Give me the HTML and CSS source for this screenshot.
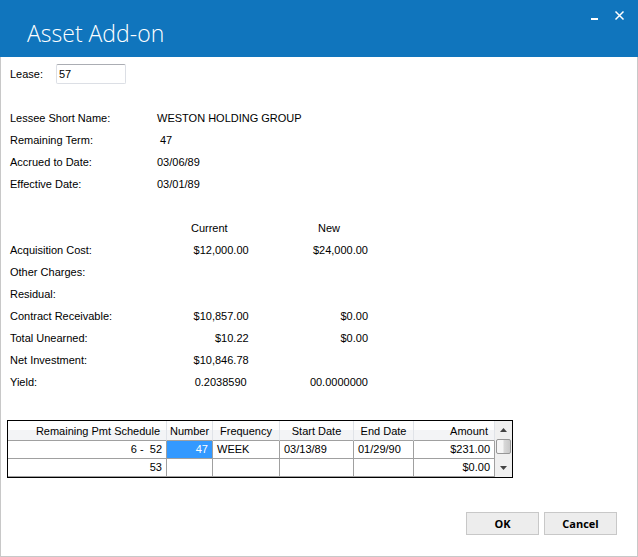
FILE: index.html
```html
<!DOCTYPE html>
<html lang="en">
<head>
<meta charset="utf-8">
<title>Asset Add-on</title>
<link rel="stylesheet" href="styles.css">
</head>
<body>
<header class="titlebar">
  <h1>Asset Add-on</h1>
  <div class="window-buttons">
    <button type="button" aria-label="Minimize"><svg width="11" height="11" viewBox="0 0 11 11"><path d="M2 9h7" stroke="#fff" stroke-width="2"/></svg></button>
    <button type="button" aria-label="Close"><svg width="11" height="11" viewBox="0 0 11 11"><path d="M1.5 1.5l8 8M9.5 1.5l-8 8" stroke="#fff" stroke-width="1.5"/></svg></button>
  </div>
</header>
<main class="content">
  <div class="lease">
    <label for="lease">Lease:</label>
    <input id="lease" type="text" value="57">
  </div>
  <dl class="details">
    <dt>Lessee Short Name:</dt><dd>WESTON HOLDING GROUP</dd>
    <dt>Remaining Term:</dt><dd class="term">47</dd>
    <dt>Accrued to Date:</dt><dd>03/06/89</dd>
    <dt>Effective Date:</dt><dd>03/01/89</dd>
  </dl>
  <table class="figures">
    <thead><tr><td></td><th scope="col" class="current">Current</th><th scope="col" class="new">New</th></tr></thead>
    <tbody>
      <tr><th scope="row">Acquisition Cost:</th><td>$12,000.00</td><td>$24,000.00</td></tr>
      <tr><th scope="row">Other Charges:</th><td></td><td></td></tr>
      <tr><th scope="row">Residual:</th><td></td><td></td></tr>
      <tr><th scope="row">Contract Receivable:</th><td>$10,857.00</td><td>$0.00</td></tr>
      <tr><th scope="row">Total Unearned:</th><td>$10.22</td><td>$0.00</td></tr>
      <tr><th scope="row">Net Investment:</th><td>$10,846.78</td><td></td></tr>
      <tr><th scope="row">Yield:</th><td class="yield">0.2038590</td><td>00.0000000</td></tr>
    </tbody>
  </table>
  <div class="schedule">
    <table>
      <colgroup><col class="c-range"><col class="c-number"><col class="c-freq"><col class="c-start"><col class="c-end"><col class="c-amount"></colgroup>
      <thead><tr><th class="num">Remaining Pmt Schedule</th><th>Number</th><th>Frequency</th><th>Start Date</th><th>End Date</th><th class="num">Amount</th></tr></thead>
      <tbody>
        <tr><td class="num">6 -&nbsp; 52</td><td class="num selected">47</td><td>WEEK</td><td>03/13/89</td><td>01/29/90</td><td class="num">$231.00</td></tr>
        <tr><td class="num">53</td><td></td><td></td><td></td><td></td><td class="num">$0.00</td></tr>
      </tbody>
    </table>
    <div class="scrollbar">
      <button type="button" aria-label="Scroll up"><svg width="7" height="4" viewBox="0 0 7 4"><path d="M0 4L3.5 0L7 4z" fill="#444"/></svg></button>
      <span class="thumb"></span>
      <button type="button" aria-label="Scroll down"><svg width="7" height="4" viewBox="0 0 7 4"><path d="M0 0h7L3.5 4z" fill="#444"/></svg></button>
    </div>
  </div>
  <footer class="actions">
    <button type="button">OK</button>
    <button type="button">Cancel</button>
  </footer>
</main>
</body>
</html>
```
FILE: styles.css
```css
* { box-sizing: border-box; }

body {
  margin: 0;
  min-height: 100vh;
  display: flex;
  flex-direction: column;
  background: #fff;
  color: #000;
  font: 11px/22px "Liberation Sans", Arial, sans-serif;
}

.titlebar {
  display: flex;
  justify-content: space-between;
  align-items: flex-start;
  height: 57px;
  padding: 10px 13px 0 27px;
  background: #1075bd;
}

.titlebar h1 {
  margin: 6px 0 0;
  color: #fff;
  font: 300 23px/34px "Open Sans", "Noto Sans", sans-serif;
}

.window-buttons { display: flex; gap: 14px; }

.window-buttons button {
  display: flex;
  padding: 0;
  border: 0;
  background: none;
}

.content {
  flex: 1;
  display: flex;
  flex-direction: column;
  padding: 6px 20px 21px 9px;
  border: 1px solid #c8c8c8;
  border-top: 0;
}

.lease { display: flex; }
.lease label { width: 46px; }

.lease input {
  width: 70px;
  height: 20px;
  margin-top: 1px;
  padding: 0 2px;
  border: 1px solid #dcdfe5;
  border-top-color: #abadb3;
  border-radius: 2px;
  background: #fff;
  font: inherit;
}

.details {
  display: grid;
  grid-template-columns: 147px 1fr;
  margin: 22px 0;
}

.details dd { margin: 0; }
.details .term { padding-left: 3px; }

.figures {
  align-self: flex-start;
  width: 358px;
  table-layout: fixed;
  border-collapse: collapse;
}

.figures th, .figures td {
  height: 22px;
  padding: 0;
  font-weight: normal;
  text-align: right;
}

.figures tbody th { text-align: left; }
.figures .current { padding-right: 21px; }
.figures .new { padding-right: 28px; }
.figures .yield { padding-right: 2px; }

.schedule {
  display: flex;
  align-self: flex-start;
  margin: 27px 0 0 -3px;
  border: 1px solid #000;
}

.schedule table {
  table-layout: fixed;
  width: 487px;
  border-collapse: separate;
  border-spacing: 0;
  line-height: 17px;
}

.c-range { width: 159px; }
.c-number { width: 46px; }
.c-freq { width: 67px; }
.c-start { width: 74px; }
.c-end { width: 60px; }
.c-amount { width: 81px; }

.schedule th, .schedule td {
  height: 18px;
  padding: 0 4px;
  border: solid #a0a0a0;
  border-width: 0 1px 1px 0;
  font-weight: normal;
  text-align: left;
  white-space: nowrap;
}

.schedule th {
  height: 20px;
  padding: 2px 0 0;
  border-right-color: #e0e3e8;
  background: linear-gradient(#fff 45%, #f3f4f6 50%);
  text-align: center;
}

.schedule .num { text-align: right; }
.schedule th.num { padding-right: 6px; }

.schedule .selected {
  background: #3399ff;
  color: #fff;
}

.scrollbar {
  display: flex;
  flex-direction: column;
  align-items: center;
  width: 17px;
  background: #f0f0f0;
}

.scrollbar button {
  display: flex;
  align-items: center;
  justify-content: center;
  width: 17px;
  height: 18px;
  padding: 0;
  border: 0;
  background: none;
}

.scrollbar button:last-child { margin-top: auto; }

.thumb {
  width: 15px;
  height: 15px;
  border: 1px solid #979797;
  border-radius: 2px;
  background: linear-gradient(90deg, #f5f5f5 45%, #d8d8d8 55%, #c8c8c8);
}

.actions {
  display: flex;
  justify-content: flex-end;
  gap: 5px;
  margin-top: auto;
}

.actions button {
  width: 73px;
  height: 23px;
  padding: 0;
  border: 1px solid #c8c8c8;
  background: #ededed;
  color: #000;
  font: bold 11px/20px "Open Sans", "Noto Sans", sans-serif;
}
```
